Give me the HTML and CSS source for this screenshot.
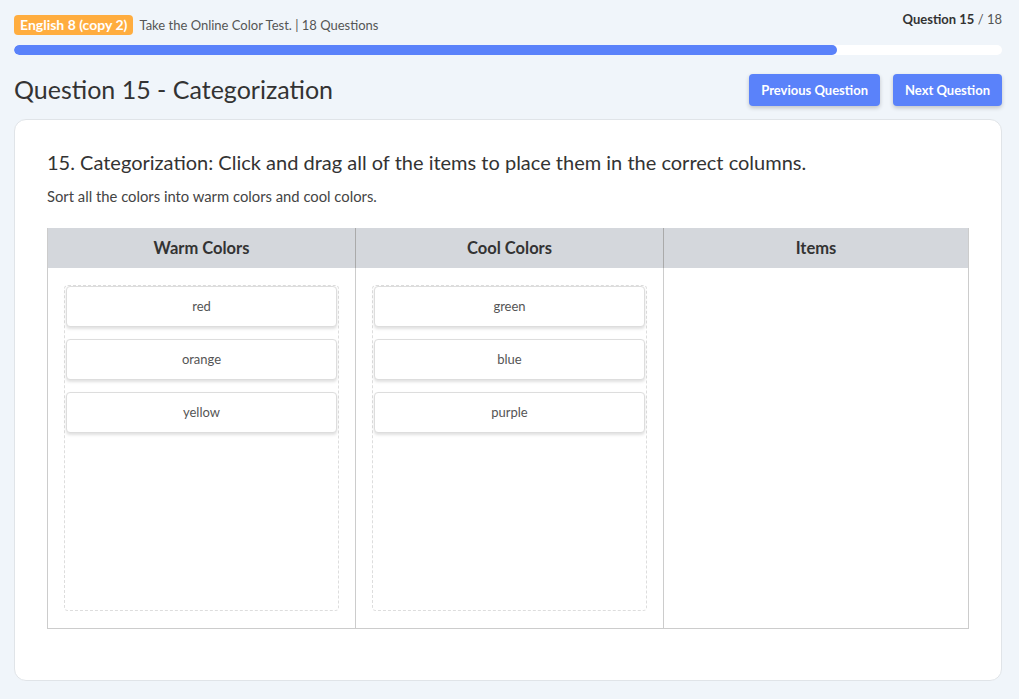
FILE: index.html
```html
<!DOCTYPE html>
<html lang="en">
<head>
    <meta charset="UTF-8">
    <meta name="viewport" content="width=device-width, initial-scale=1.0">
    <title>Question 15 - Categorization</title>
    <link rel="stylesheet" href="styles.css">
</head>
<body>
    <div class="page">
        <div class="topbar">
            <div class="test-info">
                <span class="badge">English 8 (copy 2)</span>
                <span class="test-name">Take the Online Color Test. | 18 Questions</span>
            </div>
            <div class="counter"><b>Question 15</b> / 18</div>
        </div>
        <div class="progress">
            <div class="progress-fill" style="width: 83.33%;"></div>
        </div>

        <div class="title-row">
            <h1>Question 15 - Categorization</h1>
            <div class="nav-buttons">
                <button class="button">Previous Question</button>
                <button class="button">Next Question</button>
            </div>
        </div>

        <div class="card">
            <h2>15. Categorization: Click and drag all of the items to place them in the correct columns.</h2>
            <p class="instructions">Sort all the colors into warm colors and cool colors.</p>

            <div class="board">
                <div class="col-head">Warm Colors</div>
                <div class="col-head">Cool Colors</div>
                <div class="col-head">Items</div>

                <div class="col-body">
                    <div class="dropzone">
                        <div class="item">red</div>
                        <div class="item">orange</div>
                        <div class="item">yellow</div>
                    </div>
                </div>
                <div class="col-body">
                    <div class="dropzone">
                        <div class="item">green</div>
                        <div class="item">blue</div>
                        <div class="item">purple</div>
                    </div>
                </div>
                <div class="col-body"></div>
            </div>
        </div>
    </div>
</body>
</html>
```

FILE: styles.css
```css
* {
    margin: 0;
    padding: 0;
    box-sizing: border-box;
}

body {
    font-family: 'Lato', 'Open Sans', sans-serif;
    background: #f0f5fa;
    color: #333;
}

.page {
    padding: 10px 17px 0 14px;
}

.topbar {
    display: flex;
    justify-content: space-between;
    align-items: flex-start;
    height: 35px;
}

.test-info {
    display: flex;
    align-items: center;
    margin-top: 5px;
}

.badge {
    background: #ffad3f;
    color: #fff;
    font-weight: bold;
    font-size: 14px;
    padding: 2px 6px;
    border-radius: 4px;
    line-height: 16px;
}

.test-name {
    font-size: 13px;
    color: #555;
    margin-left: 6px;
}

.counter {
    font-size: 13px;
    color: #555;
    margin-top: 1px;
}

.counter b {
    color: #333;
}

.progress {
    height: 10px;
    background: #fff;
    border-radius: 5px;
    overflow: hidden;
}

.progress-fill {
    height: 100%;
    background: #5a82fa;
    border-radius: 5px;
}

.title-row {
    display: flex;
    justify-content: space-between;
    align-items: center;
    margin-top: 18px;
    height: 33px;
}

h1 {
    font-size: 25px;
    font-weight: normal;
    color: #333;
    margin-top: -2px;
}

.nav-buttons {
    display: flex;
    gap: 13px;
}

.button {
    font-family: inherit;
    background: #5a82fa;
    color: #fff;
    font-size: 13px;
    font-weight: bold;
    border: none;
    border-radius: 4px;
    height: 32px;
    padding: 0 12px;
    box-shadow: 0 2px 4px rgba(0, 0, 0, 0.2);
    cursor: pointer;
}

.card {
    margin-top: 13px;
    background: #fff;
    border: 1px solid #e0e4e8;
    border-radius: 12px;
    padding: 30px 32px 52px 32px;
    height: 562px;
}

h2 {
    font-size: 20px;
    font-weight: normal;
    color: #333;
}

.instructions {
    font-size: 14.8px;
    color: #444;
    margin-top: 13px;
}

.board {
    display: grid;
    grid-template-columns: 307px 308px 305px;
    margin-top: 23px;
    border: 1px solid #ccc;
    border-top: none;
}

.col-head {
    background: #d4d7dc;
    font-weight: bold;
    font-size: 16.5px;
    text-align: center;
    height: 40px;
    line-height: 40px;
    color: #333;
}

.col-head + .col-head {
    border-left: 1px solid #aaa;
}

.col-body {
    height: 360px;
    padding: 17px 16px 17px 16px;
}

.col-body + .col-body {
    border-left: 1px solid #ccc;
}

.dropzone {
    height: 100%;
    border: 1px dashed #ddd;
    border-radius: 4px;
    padding: 0 1px;
    display: flex;
    flex-direction: column;
    gap: 12px;
}

.item {
    height: 41px;
    line-height: 39px;
    background: #fff;
    border: 1px solid #ddd;
    border-radius: 4px;
    box-shadow: 0 2px 3px rgba(0, 0, 0, 0.12);
    text-align: center;
    font-size: 13px;
    color: #555;
}
```
